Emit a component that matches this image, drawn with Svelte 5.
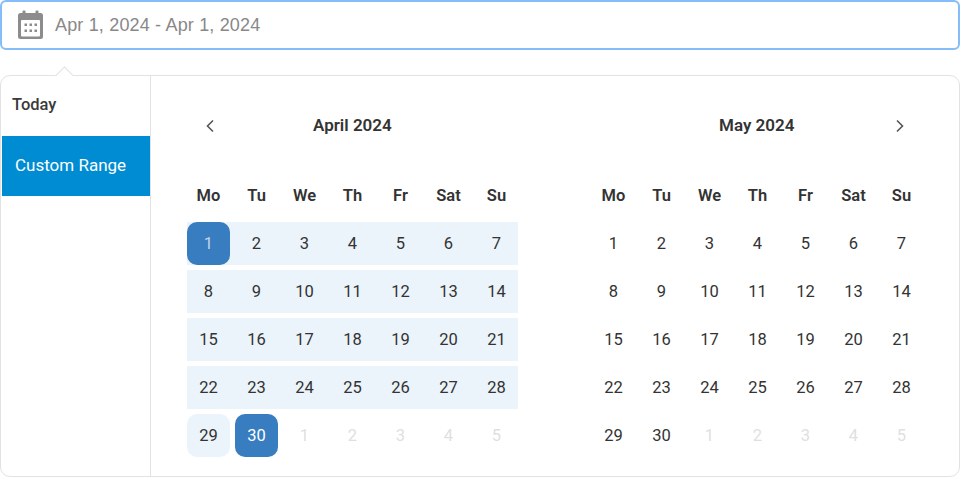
<script>
  const weekdays = ["Mo", "Tu", "We", "Th", "Fr", "Sat", "Su"];

  const days = Array.from({ length: 30 }, (_, i) => i + 1);
  const trailing = [1, 2, 3, 4, 5];

  function weeksOf() {
    const cells = [
      ...days.map((d) => ({ day: d, muted: false })),
      ...trailing.map((d) => ({ day: d, muted: true })),
    ];
    const weeks = [];
    for (let i = 0; i < cells.length; i += 7) {
      weeks.push(cells.slice(i, i + 7));
    }
    return weeks;
  }

  const weeks = weeksOf();

  function isSelected(cell, month) {
    return month === "april" && !cell.muted && (cell.day === 1 || cell.day === 30);
  }
</script>

<div class="picker">
  <div class="input">
    <svg class="cal-icon" width="25" height="29" viewBox="0 0 25 29">
      <rect x="0" y="3" width="25" height="26" rx="2.5" fill="#8c8c8c" />
      <rect x="4.5" y="0.5" width="3" height="6" rx="1" fill="#8c8c8c" />
      <rect x="17.5" y="0.5" width="3" height="6" rx="1" fill="#8c8c8c" />
      <rect x="3" y="10" width="19" height="16.5" rx="1" fill="#fff" />
      <g fill="#8c8c8c">
        <rect x="6.5" y="13.5" width="2.5" height="2.5" />
        <rect x="11.5" y="13.5" width="2.5" height="2.5" />
        <rect x="16.5" y="13.5" width="2.5" height="2.5" />
        <rect x="6.5" y="19.5" width="2.5" height="2.5" />
        <rect x="11.5" y="19.5" width="2.5" height="2.5" />
        <rect x="16.5" y="19.5" width="2.5" height="2.5" />
      </g>
    </svg>
    <span class="value">Apr 1, 2024 - Apr 1, 2024</span>
  </div>

  <div class="panel">
    <span class="caret"></span>
    <aside class="sidebar">
      <div class="preset">Today</div>
      <div class="preset active">Custom Range</div>
    </aside>

    <div class="calendars">
      {#each [{ key: "april", title: "April 2024" }, { key: "may", title: "May 2024" }] as month}
        <section class="month">
          <header class="month-head">
            {#if month.key === "april"}
              <svg class="chev" width="10" height="14" viewBox="0 0 10 14">
                <path d="M8 1.5 2.5 7 8 12.5" fill="none" stroke="#555" stroke-width="1.6" />
              </svg>
            {/if}
            <span class="title {month.key}">{month.title}</span>
            {#if month.key === "may"}
              <svg class="chev next" width="10" height="14" viewBox="0 0 10 14">
                <path d="M2 1.5 7.5 7 2 12.5" fill="none" stroke="#555" stroke-width="1.6" />
              </svg>
            {/if}
          </header>

          <div class="weekdays">
            {#each weekdays as w}
              <span>{w}</span>
            {/each}
          </div>

          {#each weeks as week, i}
            <div class="week" class:range={month.key === "april" && i < 4}>
              {#each week as cell}
                <span
                  class="day"
                  class:muted={cell.muted}
                  class:selected={isSelected(cell, month.key)}
                  class:start={month.key === "april" && cell.day === 1 && !cell.muted}
                  class:single={month.key === "april" && cell.day === 29}
                >
                  {cell.day}
                </span>
              {/each}
            </div>
          {/each}
        </section>
      {/each}
    </div>
  </div>
</div>

<style>
  :global(body) {
    background: #fff;
  }

  .picker {
    width: 960px;
    font-family: Roboto, "Liberation Sans", sans-serif;
    color: #333;
  }

  .input {
    box-sizing: border-box;
    height: 50px;
    border: 2px solid #84bdf7;
    border-radius: 6px;
    display: flex;
    align-items: center;
    padding-left: 16px;
    gap: 12px;
  }

  .cal-icon {
    flex: none;
    margin-bottom: 2px;
  }

  .value {
    font-family: "Liberation Sans", Arial, sans-serif;
    font-size: 18px;
    letter-spacing: 0.17px;
    color: #888;
  }

  .panel {
    box-sizing: border-box;
    position: relative;
    margin-top: 25px;
    height: 402px;
    border: 1px solid #e2e2e2;
    border-radius: 10px;
    display: flex;
  }

  .caret {
    position: absolute;
    top: -7px;
    left: 57px;
    width: 12px;
    height: 12px;
    background: #fff;
    border-top: 1px solid #e2e2e2;
    border-left: 1px solid #e2e2e2;
    transform: rotate(45deg);
  }

  .sidebar {
    box-sizing: border-box;
    width: 150px;
    padding-left: 1px;
    border-right: 1px solid #e2e2e2;
    flex: none;
  }

  .preset {
    height: 60px;
    line-height: 57px;
    padding-left: 10px;
    font-size: 16.5px;
    font-weight: 500;
    color: #3a3a3a;
  }

  .preset.active {
    background: #008cd2;
    color: #fff;
    font-size: 17px;
    font-weight: 400;
    padding-left: 13px;
    line-height: 59px;
  }

  .calendars {
    display: flex;
    gap: 74px;
    padding-left: 36px;
  }

  .month {
    width: 331px;
  }

  .month-head {
    height: 43px;
    margin-top: 28px;
    position: relative;
    display: flex;
    align-items: center;
  }

  .chev {
    position: absolute;
    left: 18px;
    top: 15px;
  }

  .chev.next {
    left: 303px;
  }

  .title {
    font-size: 17px;
    font-weight: 600;
    width: 100%;
    padding-left: 126px;
    margin-top: -2px;
  }

  .title.may {
    padding-left: 127px;
  }

  .weekdays,
  .week {
    display: grid;
    grid-template-columns: repeat(7, 43px);
    column-gap: 5px;
  }

  .weekdays {
    margin-top: 27px;
    height: 48px;
    line-height: 43px;
    text-align: center;
    font-size: 16.5px;
    font-weight: 600;
  }

  .week {
    height: 43px;
    margin-bottom: 5px;
  }

  .week.range {
    background: #ebf3fb;
  }

  .day {
    height: 43px;
    line-height: 43px;
    text-align: center;
    font-size: 16.5px;
    border-radius: 10px;
  }

  .day.muted {
    color: #dfdfdf;
  }

  .day.single {
    background: #ebf3fb;
  }

  .day.selected {
    background: #377dbf;
    color: #fff;
  }

  .day.start {
    color: #c2d4e8;
  }
</style>
